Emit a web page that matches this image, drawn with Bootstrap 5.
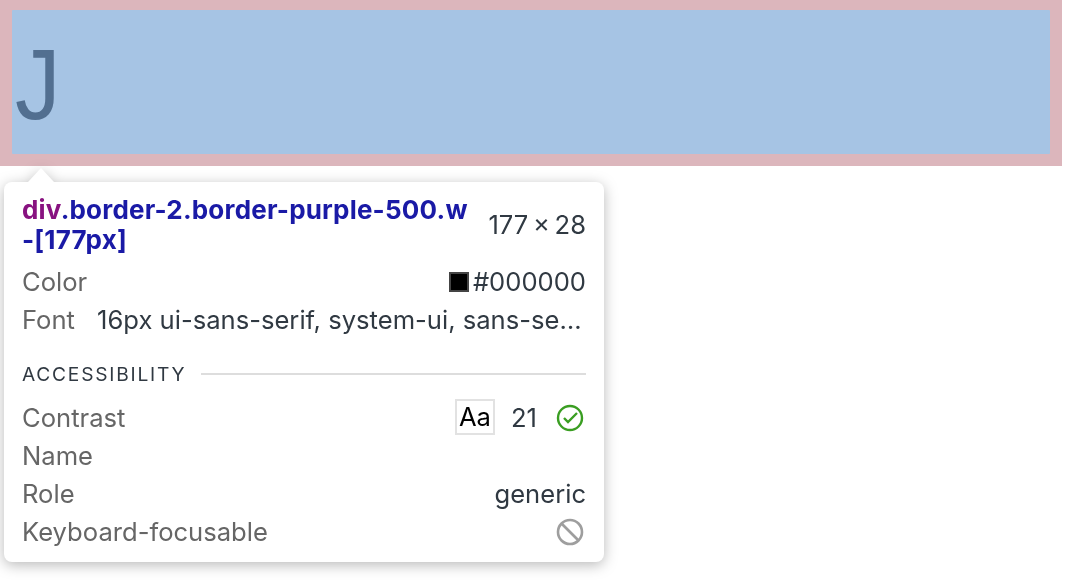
<!DOCTYPE html>
<html lang="en">

<head>
    <meta charset="UTF-8">
    <title>Inspect tooltip</title>
    <link rel="stylesheet" href="https://cdn.jsdelivr.net/npm/bootstrap@5.3.2/dist/css/bootstrap.min.css">
    <style>
        body { background: #fff; font-family: Inter, "Liberation Sans", sans-serif; overflow: hidden; }
        .margin-box { width: 1062px; height: 166px; padding: 10px 12px 12px; background: #dcb6bc; }
        .content-box { height: 144px; background: #a6c4e4; color: #526f90; font-family: "Liberation Sans", sans-serif; font-size: 101px; line-height: 148px; border-radius: 1px; }
        .big-letter { display: inline-block; margin-left: 3px; transform: scaleX(.9); transform-origin: left; }
        .inspect-tip { position: absolute; left: 4px; top: 182px; width: 600px; height: 380px; padding: 13px 18px 0; background: #fff; border-radius: 8px; filter: drop-shadow(0 3px 7px rgba(0, 0, 0, .28)); font-size: 25.6px; line-height: 38px; color: #303942; }
        .inspect-tip::before { content: ""; position: absolute; left: 24px; top: -14px; width: 26px; height: 14px; background: #fff; clip-path: polygon(50% 0, 100% 100%, 0 100%); }
        .tip-title { font-weight: 700; font-size: 26px; letter-spacing: .2px; line-height: 30px; color: #1a1aa6; white-space: nowrap; }
        .tag-name { color: #881280; }
        .tip-size { line-height: 30px; padding-top: 15px; }
        .tip-label { color: #666; white-space: nowrap; }
        .tip-font { width: 489px; white-space: nowrap; overflow: hidden; }
        .swatch { width: 20px; height: 20px; background: #000; border: 2px solid #444; margin-right: 4px; }
        .tip-section { margin: 24px 0 14px; }
        .tip-heading { font-size: 19.2px; letter-spacing: 1.75px; line-height: 22px; color: #303942; }
        .tip-rule { height: 2px; background: #ddd; margin-left: 15px; }
        .aa-box { width: 40px; height: 36px; margin: 0 16px 2px 0; border: 2px solid #e2e2e2; color: #000; line-height: 32px; text-align: center; }
        .contrast-icon { margin-left: 17px; }
    </style>
</head>

<body>

    <div class="margin-box">
        <div class="content-box"><span class="big-letter">J</span></div>
    </div>

    <div class="inspect-tip">
        <div class="d-flex justify-content-between">
            <div class="tip-title"><span class="tag-name">div</span>.border-2.border-purple-500.w<br>-[177px]</div>
            <div class="tip-size">177&#8201;×&#8201;28</div>
        </div>
        <div class="d-flex justify-content-between mt-2">
            <span class="tip-label">Color</span>
            <span class="d-flex align-items-center"><span class="swatch"></span>#000000</span>
        </div>
        <div class="d-flex justify-content-between">
            <span class="tip-label">Font</span>
            <span class="tip-font">16px ui-sans-serif, system-ui, sans-se…</span>
        </div>
        <div class="d-flex align-items-center tip-section">
            <span class="tip-heading">ACCESSIBILITY</span>
            <div class="tip-rule flex-grow-1"></div>
        </div>
        <div class="d-flex justify-content-between">
            <span class="tip-label">Contrast</span>
            <span class="d-flex align-items-center">
                <span class="aa-box">Aa</span>21
                <svg class="contrast-icon" width="32" height="32" viewBox="0 0 32 32" fill="none" stroke="#3a9e22" stroke-width="2.4">
                    <circle cx="16" cy="16" r="12"/>
                    <path d="M10 16l4 4 9-9"/>
                </svg>
            </span>
        </div>
        <div class="d-flex justify-content-between">
            <span class="tip-label">Name</span>
        </div>
        <div class="d-flex justify-content-between">
            <span class="tip-label">Role</span>
            <span>generic</span>
        </div>
        <div class="d-flex justify-content-between align-items-center">
            <span class="tip-label">Keyboard-focusable</span>
            <svg width="32" height="32" viewBox="0 0 32 32" fill="none" stroke="#9e9e9e" stroke-width="2.6">
                <circle cx="16" cy="16" r="12"/>
                <path d="M7.5 7.5l17 17"/>
            </svg>
        </div>
    </div>

    <script src="https://cdn.jsdelivr.net/npm/bootstrap@5.3.2/dist/js/bootstrap.bundle.min.js"></script>
</body>

</html>
